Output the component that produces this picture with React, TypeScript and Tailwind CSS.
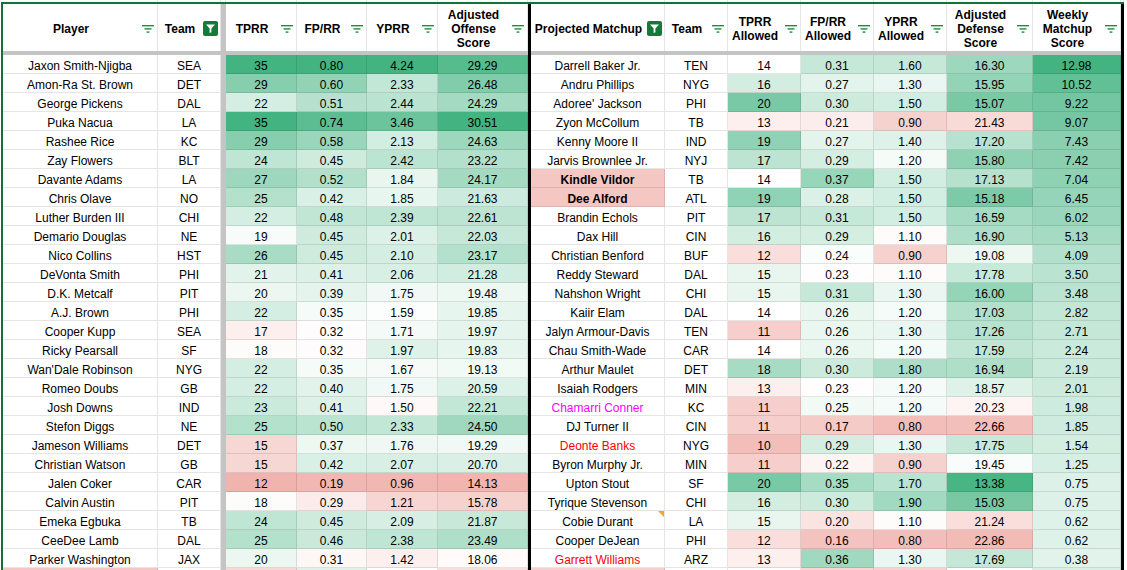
import React from 'react';

type Scale = { red: number; mid: number; green: number };

const GREEN = [67, 179, 129];
const RED = [230, 124, 115];

function scaleColor(v: number, s: Scale) {
  let t = 0;
  let target = GREEN;
  if ((v - s.mid) * (s.green - s.mid) > 0) {
    t = (v - s.mid) / (s.green - s.mid);
  } else {
    t = (v - s.mid) / (s.red - s.mid);
    target = RED;
  }
  t = Math.max(0, Math.min(1, t));
  const c = target.map((x) => Math.round(255 + (x - 255) * t));
  return `rgb(${c[0]}, ${c[1]}, ${c[2]})`;
}

// column scales, left block then right block
const scales: Scale[] = [
  { red: 7.5, mid: 18.3, green: 35 },
  { red: 0.08, mid: 0.325, green: 0.8 },
  { red: 0.48, mid: 1.55, green: 4.0 },
  { red: 11, mid: 18.3, green: 30.5 },
  { red: 6, mid: 14, green: 22.5 },
  { red: 0.075, mid: 0.232, green: 0.485 },
  { red: 0.48, mid: 1.12, green: 2.7 },
  { red: 25.8, mid: 19.7, green: 13.2 },
  { red: -10, mid: -2, green: 13 },
];

type Row = {
  player: string;
  team: string;
  off: string[];
  opp: string;
  oppTeam: string;
  def: string[];
  oppStyle?: 'alert' | 'magenta' | 'red' | 'note';
};

const rows: Row[] = [
  { player: 'Jaxon Smith-Njigba', team: 'SEA', off: ['35', '0.80', '4.24', '29.29'], opp: 'Darrell Baker Jr.', oppTeam: 'TEN', def: ['14', '0.31', '1.60', '16.30', '12.98'] },
  { player: 'Amon-Ra St. Brown', team: 'DET', off: ['29', '0.60', '2.33', '26.48'], opp: 'Andru Phillips', oppTeam: 'NYG', def: ['16', '0.27', '1.30', '15.95', '10.52'] },
  { player: 'George Pickens', team: 'DAL', off: ['22', '0.51', '2.44', '24.29'], opp: "Adoree' Jackson", oppTeam: 'PHI', def: ['20', '0.30', '1.50', '15.07', '9.22'] },
  { player: 'Puka Nacua', team: 'LA', off: ['35', '0.74', '3.46', '30.51'], opp: 'Zyon McCollum', oppTeam: 'TB', def: ['13', '0.21', '0.90', '21.43', '9.07'] },
  { player: 'Rashee Rice', team: 'KC', off: ['29', '0.58', '2.13', '24.63'], opp: 'Kenny Moore II', oppTeam: 'IND', def: ['19', '0.27', '1.40', '17.20', '7.43'] },
  { player: 'Zay Flowers', team: 'BLT', off: ['24', '0.45', '2.42', '23.22'], opp: 'Jarvis Brownlee Jr.', oppTeam: 'NYJ', def: ['17', '0.29', '1.20', '15.80', '7.42'] },
  { player: 'Davante Adams', team: 'LA', off: ['27', '0.52', '1.84', '24.17'], opp: 'Kindle Vildor', oppTeam: 'TB', def: ['14', '0.37', '1.50', '17.13', '7.04'], oppStyle: 'alert' },
  { player: 'Chris Olave', team: 'NO', off: ['25', '0.42', '1.85', '21.63'], opp: 'Dee Alford', oppTeam: 'ATL', def: ['19', '0.28', '1.50', '15.18', '6.45'], oppStyle: 'alert' },
  { player: 'Luther Burden III', team: 'CHI', off: ['22', '0.48', '2.39', '22.61'], opp: 'Brandin Echols', oppTeam: 'PIT', def: ['17', '0.31', '1.50', '16.59', '6.02'] },
  { player: 'Demario Douglas', team: 'NE', off: ['19', '0.45', '2.01', '22.03'], opp: 'Dax Hill', oppTeam: 'CIN', def: ['16', '0.29', '1.10', '16.90', '5.13'] },
  { player: 'Nico Collins', team: 'HST', off: ['26', '0.45', '2.10', '23.17'], opp: 'Christian Benford', oppTeam: 'BUF', def: ['12', '0.24', '0.90', '19.08', '4.09'] },
  { player: 'DeVonta Smith', team: 'PHI', off: ['21', '0.41', '2.06', '21.28'], opp: 'Reddy Steward', oppTeam: 'DAL', def: ['15', '0.23', '1.10', '17.78', '3.50'] },
  { player: 'D.K. Metcalf', team: 'PIT', off: ['20', '0.39', '1.75', '19.48'], opp: 'Nahshon Wright', oppTeam: 'CHI', def: ['15', '0.31', '1.30', '16.00', '3.48'] },
  { player: 'A.J. Brown', team: 'PHI', off: ['22', '0.35', '1.59', '19.85'], opp: 'Kaiir Elam', oppTeam: 'DAL', def: ['14', '0.26', '1.20', '17.03', '2.82'] },
  { player: 'Cooper Kupp', team: 'SEA', off: ['17', '0.32', '1.71', '19.97'], opp: 'Jalyn Armour-Davis', oppTeam: 'TEN', def: ['11', '0.26', '1.30', '17.26', '2.71'] },
  { player: 'Ricky Pearsall', team: 'SF', off: ['18', '0.32', '1.97', '19.83'], opp: 'Chau Smith-Wade', oppTeam: 'CAR', def: ['14', '0.26', '1.20', '17.59', '2.24'] },
  { player: "Wan'Dale Robinson", team: 'NYG', off: ['22', '0.35', '1.67', '19.13'], opp: 'Arthur Maulet', oppTeam: 'DET', def: ['18', '0.30', '1.80', '16.94', '2.19'] },
  { player: 'Romeo Doubs', team: 'GB', off: ['22', '0.40', '1.75', '20.59'], opp: 'Isaiah Rodgers', oppTeam: 'MIN', def: ['13', '0.23', '1.20', '18.57', '2.01'] },
  { player: 'Josh Downs', team: 'IND', off: ['23', '0.41', '1.50', '22.21'], opp: 'Chamarri Conner', oppTeam: 'KC', def: ['11', '0.25', '1.20', '20.23', '1.98'], oppStyle: 'magenta' },
  { player: 'Stefon Diggs', team: 'NE', off: ['25', '0.50', '2.33', '24.50'], opp: 'DJ Turner II', oppTeam: 'CIN', def: ['11', '0.17', '0.80', '22.66', '1.85'] },
  { player: 'Jameson Williams', team: 'DET', off: ['15', '0.37', '1.76', '19.29'], opp: 'Deonte Banks', oppTeam: 'NYG', def: ['10', '0.29', '1.30', '17.75', '1.54'], oppStyle: 'red' },
  { player: 'Christian Watson', team: 'GB', off: ['15', '0.42', '2.07', '20.70'], opp: 'Byron Murphy Jr.', oppTeam: 'MIN', def: ['11', '0.22', '0.90', '19.45', '1.25'] },
  { player: 'Jalen Coker', team: 'CAR', off: ['12', '0.19', '0.96', '14.13'], opp: 'Upton Stout', oppTeam: 'SF', def: ['20', '0.35', '1.70', '13.38', '0.75'] },
  { player: 'Calvin Austin', team: 'PIT', off: ['18', '0.29', '1.21', '15.78'], opp: 'Tyrique Stevenson', oppTeam: 'CHI', def: ['16', '0.30', '1.90', '15.03', '0.75'] },
  { player: 'Emeka Egbuka', team: 'TB', off: ['24', '0.45', '2.09', '21.87'], opp: 'Cobie Durant', oppTeam: 'LA', def: ['15', '0.20', '1.10', '21.24', '0.62'], oppStyle: 'note' },
  { player: 'CeeDee Lamb', team: 'DAL', off: ['25', '0.46', '2.38', '23.49'], opp: 'Cooper DeJean', oppTeam: 'PHI', def: ['12', '0.16', '0.80', '22.86', '0.62'] },
  { player: 'Parker Washington', team: 'JAX', off: ['20', '0.31', '1.42', '18.06'], opp: 'Garrett Williams', oppTeam: 'ARZ', def: ['13', '0.36', '1.30', '17.69', '0.38'], oppStyle: 'red' },
];

const GRID =
  'grid grid-cols-[155px_63px_5px_71px_70px_71px_90px_3px_134px_63px_73px_73px_73px_86px_88px_3px]';
const LINE = 'border-r border-b border-black/10';

function FilterIcon() {
  return (
    <svg width="12" height="8" viewBox="0 0 12 8" className="shrink-0">
      <rect x="0" y="0" width="12" height="1.4" fill="#1e8e3e" />
      <rect x="2.5" y="3.2" width="7" height="1.4" fill="#1e8e3e" />
      <rect x="4.6" y="6.4" width="2.8" height="1.4" fill="#1e8e3e" />
    </svg>
  );
}

function ActiveFilter() {
  return (
    <div className="w-[15px] h-[15px] rounded-[2px] bg-[#137a3a] flex items-center justify-center shrink-0">
      <svg width="11" height="11" viewBox="0 0 11 11">
        <path d="M1 1.5h9L6.4 5.6v3.6L4.6 10V5.6z" fill="white" />
      </svg>
    </div>
  );
}

function HeaderCell({ label, active }: { label: string; active?: boolean }) {
  return (
    <div className="h-[47px] pt-[2px] border-r border-black/10 flex items-center bg-white">
      <div className="flex-1 text-center font-bold leading-[14px]">
        {label.split('\n').map((l) => (
          <div key={l}>{l}</div>
        ))}
      </div>
      <div className="w-[17px] mr-[1px] flex justify-center">
        {active ? <ActiveFilter /> : <FilterIcon />}
      </div>
    </div>
  );
}

function Cell({ text, bg, className = '' }: { text: string; bg?: string; className?: string }) {
  return (
    <div
      className={`h-[19px] pt-[3px] ${LINE} flex items-center justify-center whitespace-nowrap overflow-hidden ${className}`}
      style={bg ? { backgroundColor: bg } : undefined}
    >
      {text}
    </div>
  );
}

const Gray = () => <div className="bg-[#c4c4c4]" />;
const Black = () => <div className="bg-black" />;

export default function App() {
  const partial = ['#f4c7c3', '#ffffff', '#f8d7d4', '#dff1e8', '#ffffff', '#f6e0de', '#f6d0cc', '#ffffff', '#ffffff', '#f8d6d2', '#f8d2cf', '#ffffff', '#d9eee4'];
  return (
    <div className="w-[1127px] h-[570px] overflow-hidden bg-white font-['Liberation_Sans',Arial,sans-serif] text-[12px] text-black">
      {/* sliver of the row above the filter range */}
      <div className={`${GRID} h-[2px] ml-[3px]`}>
        {Array.from({ length: 16 }).map((_, i) => (
          <div key={i} className="border-r border-black/10" />
        ))}
      </div>
      <div className="ml-[1px] border-l-2 border-t-2 border-[#137333] w-[1123px]">
        <div className={GRID}>
          <HeaderCell label="Player" />
          <HeaderCell label="Team" active />
          <Gray />
          <HeaderCell label="TPRR" />
          <HeaderCell label="FP/RR" />
          <HeaderCell label="YPRR" />
          <HeaderCell label={'Adjusted\nOffense\nScore'} />
          <Black />
          <HeaderCell label="Projected Matchup" active />
          <HeaderCell label="Team" />
          <HeaderCell label={'TPRR\nAllowed'} />
          <HeaderCell label={'FP/RR\nAllowed'} />
          <HeaderCell label={'YPRR\nAllowed'} />
          <HeaderCell label={'Adjusted\nDefense\nScore'} />
          <HeaderCell label={'Weekly\nMatchup\nScore'} />
          <Black />
        </div>

        {/* frozen row bar */}
        <div className={`${GRID} h-[4px]`}>
          <div className="col-span-7 bg-[#c4c4c4]" />
          <Black />
          <div className="col-span-7 bg-[#c4c4c4]" />
          <Black />
        </div>

        {rows.map((r) => {
          let oppClass = '';
          let oppBg: string | undefined;
          if (r.oppStyle === 'alert') {
            oppClass = 'font-bold';
            oppBg = '#f4c7c3';
          } else if (r.oppStyle === 'magenta') oppClass = 'text-[#ff00ff]';
          else if (r.oppStyle === 'red') oppClass = 'text-[#ff0000]';
          return (
            <div key={r.player} className={GRID}>
              <Cell text={r.player} />
              <Cell text={r.team} />
              <Gray />
              {r.off.map((v, i) => (
                <Cell key={i} text={v} bg={scaleColor(parseFloat(v), scales[i])} />
              ))}
              <Black />
              <div className="relative">
                <Cell text={r.opp} bg={oppBg} className={oppClass} />
                {r.oppStyle === 'note' && (
                  <div className="absolute top-0 right-[1px] w-0 h-0 border-t-[6px] border-t-[#f5a623] border-l-[6px] border-l-transparent" />
                )}
              </div>
              <Cell text={r.oppTeam} />
              {r.def.map((v, i) => (
                <Cell key={i} text={v} bg={scaleColor(parseFloat(v), scales[i + 4])} />
              ))}
              <Black />
            </div>
          );
        })}

        {/* next row, cut off by the window */}
        <div className={GRID}>
          <Cell text="" bg={partial[0]} />
          <Cell text="" />
          <Gray />
          <Cell text="" bg={partial[2]} />
          <Cell text="" bg={partial[3]} />
          <Cell text="" bg={partial[4]} />
          <Cell text="" bg={partial[5]} />
          <Black />
          <Cell text="" bg={partial[6]} />
          <Cell text="" />
          <Cell text="" />
          <Cell text="" bg={partial[9]} />
          <Cell text="" bg={partial[10]} />
          <Cell text="" />
          <Cell text="" bg={partial[12]} />
          <Black />
        </div>
      </div>
    </div>
  );
}
